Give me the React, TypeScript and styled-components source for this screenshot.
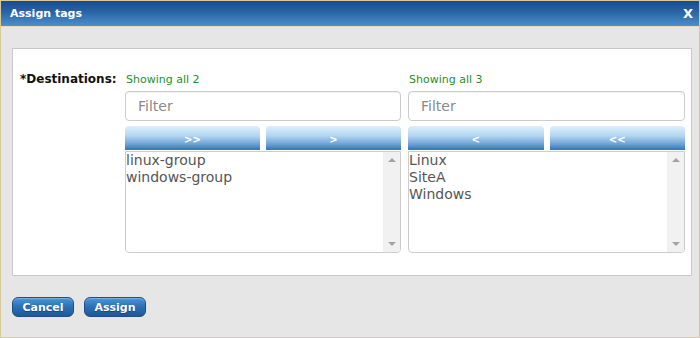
import React from "react";
import styled, { createGlobalStyle } from "styled-components";

const GlobalStyle = createGlobalStyle`
  html, body { margin: 0; padding: 0; background: #ffffff; }
  body { font-family: "DejaVu Sans", Verdana, sans-serif; }
  * { box-sizing: border-box; }
`;

const Dialog = styled.div`
  width: 700px;
  height: 338px;
  border: 1px solid #d5cb9c;
  background: #e6e6e6;
  display: flex;
  flex-direction: column;
`;

const TitleBar = styled.div`
  height: 26px;
  flex: none;
  background: linear-gradient(to bottom, #184c8c 0%, #2a65a5 45%, #4b90cc 100%);
  border-bottom: 1px solid #e4ddb8;
  display: flex;
  align-items: center;
  justify-content: space-between;
  padding: 0 6px 0 9px;
`;

const Title = styled.span`
  color: #ffffff;
  font-weight: bold;
  font-size: 11px;
  line-height: 14px;
  margin-top: 1px;
`;

const Close = styled.span`
  color: #ffffff;
  font-weight: bold;
  font-size: 13px;
  line-height: 14px;
  font-family: "DejaVu Sans", sans-serif;
`;

const Body = styled.div`
  flex: 1;
  padding: 21px 7px 0 11px;
  display: flex;
  flex-direction: column;
`;

const Panel = styled.div`
  background: #ffffff;
  border: 1px solid #c9c9c9;
  height: 228px;
  padding: 24px 5px 0 7px;
  display: grid;
  grid-template-columns: 105px 276px 277px;
  align-items: start;
`;

const Label = styled.div`
  font-size: 12px;
  font-weight: bold;
  line-height: 14px;
  color: #111111;
  margin-top: -1px;
`;

const Column = styled.div<{ $right?: boolean }>`
  display: flex;
  flex-direction: column;
  margin-left: ${(p) => (p.$right ? "7px" : "0")};
  width: ${(p) => (p.$right ? "277px" : "276px")};
`;

const Status = styled.div`
  font-size: 11px;
  line-height: 14px;
  color: #1f8f1f;
  padding-left: 1px;
  margin-bottom: 4px;
`;

const Filter = styled.input`
  height: 30px;
  width: 100%;
  border: 1px solid #cccccc;
  border-radius: 4px;
  box-shadow: inset 0 1px 1px rgba(0, 0, 0, 0.06);
  padding: 0 12px;
  font-family: "DejaVu Sans", sans-serif;
  font-size: 14px;
  color: #555555;
  outline: none;
  &::placeholder { color: #8a8a8a; }
`;

const MoveRow = styled.div`
  display: flex;
  gap: 6px;
  margin-top: 5px;
`;

const MoveButton = styled.button`
  flex: 1;
  height: 24px;
  border: none;
  border-radius: 4px 4px 0 0;
  background: linear-gradient(to bottom, #dcf0fd 0%, #b4d6f1 40%, #6fa3d4 75%, #3672b2 100%);
  color: #ffffff;
  font-family: "DejaVu Sans", sans-serif;
  font-weight: bold;
  font-size: 10px;
  padding: 2px 0 0 0;
  cursor: pointer;
`;

const ListBox = styled.div`
  margin-top: 1px;
  height: 102px;
  border: 1px solid #cccccc;
  border-radius: 0 0 4px 4px;
  display: flex;
  overflow: hidden;
`;

const Items = styled.div`
  flex: 1;
`;

const Item = styled.div`
  font-size: 14px;
  line-height: 17px;
  color: #555555;
  white-space: nowrap;
`;

const ScrollTrack = styled.div`
  width: 17px;
  background: #f1f1f1;
  display: flex;
  flex-direction: column;
  justify-content: space-between;
  align-items: center;
  padding: 6px 0 6px 0;
`;

const Arrow = styled.div<{ $down?: boolean }>`
  width: 0;
  height: 0;
  border-left: 4px solid transparent;
  border-right: 4px solid transparent;
  ${(p) =>
    p.$down
      ? "border-top: 4px solid #a3a3a3;"
      : "border-bottom: 4px solid #a3a3a3;"}
`;

const Footer = styled.div`
  display: flex;
  gap: 10px;
  margin-top: 21px;
`;

const ActionButton = styled.button`
  width: 62px;
  height: 20px;
  border: 1px solid #1b4f8a;
  border-radius: 6px;
  background: linear-gradient(to bottom, #4f97d6 0%, #2d72b8 45%, #1d5899 100%);
  box-shadow: inset 0 1px 0 rgba(255, 255, 255, 0.25);
  color: #ffffff;
  font-family: "DejaVu Sans", sans-serif;
  font-weight: bold;
  font-size: 11px;
  text-shadow: 0 1px 1px rgba(0, 0, 0, 0.35);
  padding: 0;
  cursor: pointer;
`;

type ListProps = { items: string[] };

const List: React.FC<ListProps> = ({ items }) => (
  <ListBox>
    <Items>
      {items.map((i) => (
        <Item key={i}>{i}</Item>
      ))}
    </Items>
    <ScrollTrack>
      <Arrow />
      <Arrow $down />
    </ScrollTrack>
  </ListBox>
);

export default function App() {
  const available = ["linux-group", "windows-group"];
  const selected = ["Linux", "SiteA", "Windows"];
  return (
    <>
      <GlobalStyle />
      <Dialog>
        <TitleBar>
          <Title>Assign tags</Title>
          <Close>X</Close>
        </TitleBar>
        <Body>
          <Panel>
            <Label>*Destinations:</Label>
            <Column>
              <Status>Showing all {available.length}</Status>
              <Filter placeholder="Filter" />
              <MoveRow>
                <MoveButton>&gt;&gt;</MoveButton>
                <MoveButton>&gt;</MoveButton>
              </MoveRow>
              <List items={available} />
            </Column>
            <Column $right>
              <Status>Showing all {selected.length}</Status>
              <Filter placeholder="Filter" />
              <MoveRow>
                <MoveButton>&lt;</MoveButton>
                <MoveButton>&lt;&lt;</MoveButton>
              </MoveRow>
              <List items={selected} />
            </Column>
          </Panel>
          <Footer>
            <ActionButton>Cancel</ActionButton>
            <ActionButton>Assign</ActionButton>
          </Footer>
        </Body>
      </Dialog>
    </>
  );
}
